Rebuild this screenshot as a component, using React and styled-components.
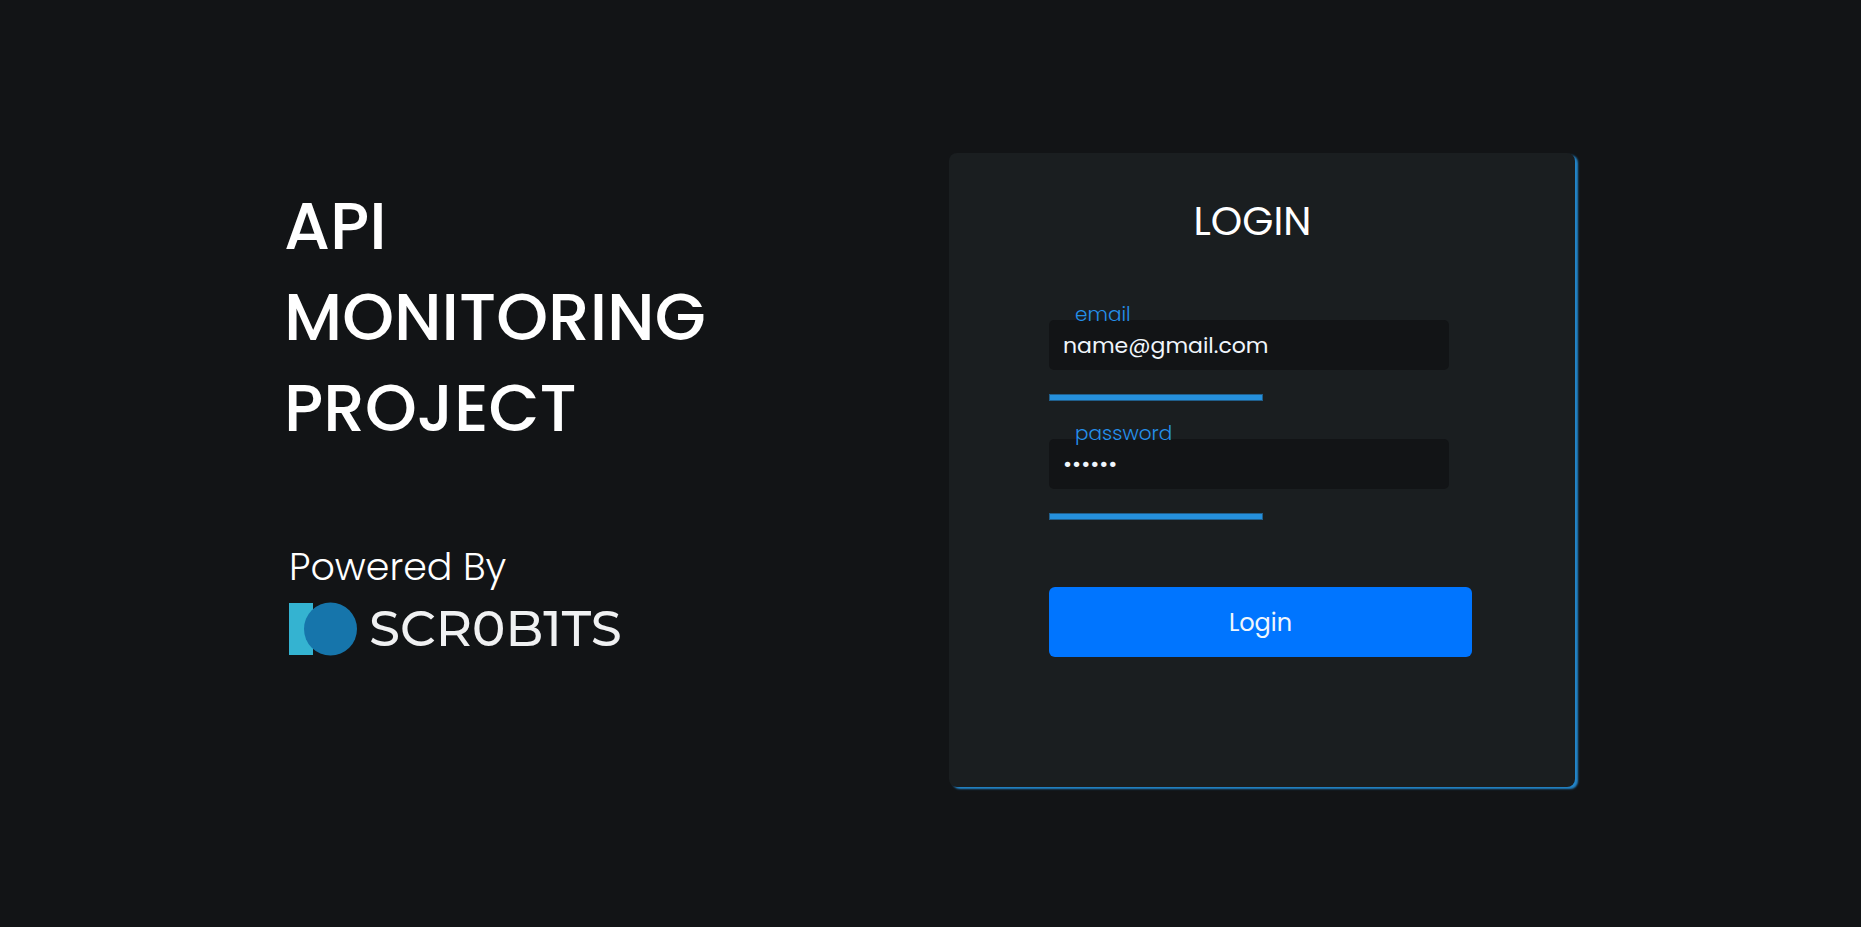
import React from "react";
import styled, { createGlobalStyle } from "styled-components";

const GlobalStyle = createGlobalStyle`
  *, *::before, *::after {
    box-sizing: border-box;
  }

  body {
    margin: 0;
    background: #121416;
    color: #fff;
    font-family: Poppins, Inter, "Liberation Sans", sans-serif;
  }
`;

const Page = styled.main`
  display: flex;
  align-items: center;
  justify-content: center;
  min-height: 100vh;
  padding: 13px 26px 0 24px;
`;

const Content = styled.div`
  display: flex;
  flex-wrap: wrap;
  align-items: flex-start;
  justify-content: space-between;
  gap: 48px;
  width: 100%;
  max-width: 1291px;
`;

const Intro = styled.section`
  padding-top: 28px;
`;

const Title = styled.h1`
  max-width: 450px;
  margin: 0;
  font-size: 66px;
  font-weight: 500;
  line-height: 91px;
`;

const PoweredBy = styled.div`
  margin-top: 83px;
  padding-left: 5px;
`;

const PoweredText = styled.p`
  margin: 0;
  font-size: 38px;
  font-weight: 300;
  line-height: 60px;
`;

const Brand = styled.div`
  display: flex;
  align-items: center;
  gap: 12px;
  margin-top: 5px;
`;

const BrandMark = styled.svg`
  display: block;
  width: 68px;
  height: 54px;
`;

const BrandName = styled.span`
  color: #f0f1f2;
  font-family: Montserrat, Poppins, Inter, sans-serif;
  font-size: 50px;
  font-weight: 500;
  line-height: 54px;
`;

const Card = styled.section`
  flex: 0 1 626px;
  min-height: 634px;
  padding: 36px 103px 36px 100px;
  border-radius: 8px;
  background: #1a1e20;
  box-shadow: 3px 2px 2px #2385c9;
`;

const CardTitle = styled.h2`
  margin: 0;
  padding-right: 16px;
  font-size: 40px;
  font-weight: 400;
  line-height: 64px;
  text-align: center;
`;

const Form = styled.form`
  display: flex;
  flex-direction: column;
  padding-top: 46px;
`;

const Field = styled.div`
  display: flex;
  flex-direction: column;
  align-items: flex-start;
`;

const Label = styled.label`
  z-index: 1;
  margin: 0 0 -9px 26px;
  color: #2590eb;
  font-size: 20px;
  font-weight: 300;
  line-height: 30px;
`;

const Input = styled.input`
  width: 400px;
  max-width: 100%;
  height: 50px;
  padding: 0 14px;
  border: 0;
  border-radius: 5px;
  outline: 0;
  background: #121416;
  color: #f0f6fc;
  font-family: inherit;
  font-size: 22px;
  font-weight: 400;
`;

const Underline = styled.span`
  width: 214px;
  height: 7px;
  margin: 24px 0 17px;
  border: 1px solid #205f8c;
  background: #2590dc;
`;

const SubmitButton = styled.button`
  width: 100%;
  height: 70px;
  margin-top: 50px;
  border: 0;
  border-radius: 6px;
  background: #0075ff;
  color: #f0f6fc;
  font-family: inherit;
  font-size: 24px;
  font-weight: 400;
  cursor: pointer;
`;

function FormField({ id, label, ...inputProps }) {
  return (
    <Field>
      <Label htmlFor={id}>{label}</Label>
      <Input id={id} name={id} {...inputProps} />
      <Underline />
    </Field>
  );
}

export default function App() {
  return (
    <>
      <GlobalStyle />
      <Page>
        <Content>
          <Intro>
            <Title>API MONITORING PROJECT</Title>
            <PoweredBy>
              <PoweredText>Powered By</PoweredText>
              <Brand>
                <BrandMark viewBox="0 0 68 54" aria-hidden="true">
                  <rect x="0" y="1" width="24" height="52" fill="#34b3d1" />
                  <circle cx="41.500" cy="27" r="26.500" fill="#1675ab" />
                </BrandMark>
                <BrandName>SCR0B1TS</BrandName>
              </Brand>
            </PoweredBy>
          </Intro>
          <Card>
            <CardTitle>LOGIN</CardTitle>
            <Form onSubmit={(event) => event.preventDefault()}>
              <FormField
                id="email"
                label="email"
                type="email"
                defaultValue="name@gmail.com"
                autoComplete="email"
              />
              <FormField
                id="password"
                label="password"
                type="password"
                defaultValue="secret"
                autoComplete="current-password"
              />
              <SubmitButton type="submit">Login</SubmitButton>
            </Form>
          </Card>
        </Content>
      </Page>
    </>
  );
}
